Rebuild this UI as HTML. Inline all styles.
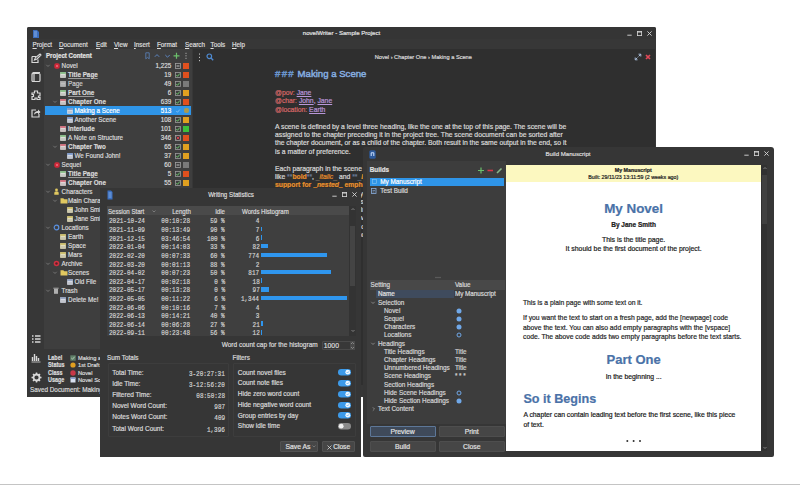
<!DOCTYPE html>
<html><head><meta charset="utf-8">
<style>
*{margin:0;padding:0;box-sizing:border-box}
html,body{width:800px;height:485px;overflow:hidden;background:#fff;font-family:"Liberation Sans",sans-serif;position:relative}
.a{position:absolute;white-space:nowrap;-webkit-text-stroke:0.2px currentColor}
svg.a{overflow:visible}
</style></head><body>
<div class="a" style="left:0;top:484px;width:800px;height:1px;background:#c4c4c4"></div>
<div class="a" style="left:27px;top:27px;width:629px;height:369.5px;background:#373737;border-radius:2px 2px 0 0"></div>
<div class="a" style="left:27px;top:27px;width:629px;height:12px;background:#353535;border-radius:2px 2px 0 0"></div>
<svg class="a" style="left:32px;top:30px" width="7" height="8" viewBox="0 0 7 8"><path d="M1 0h4l2 2v6H1z" fill="#3c6fc0"/><path d="M2 2h3M2 4h3M2 6h3" stroke="#9cc0f0" stroke-width="0.8"/></svg>
<div class="a" style="left:41.50px;width:600px;text-align:center;top:28.30px;font-size:6.1px;line-height:10px;color:#e0e0e0;font-weight:normal;">novelWriter - Sample Project</div>
<svg class="a" style="left:627.0px;top:31.0px" width="5" height="5"><path d="M0.3 4.2h4.4" stroke="#d8d8d8" stroke-width="0.9"/></svg>
<svg class="a" style="left:637.0px;top:31.0px" width="5" height="5"><rect x="0.4" y="0.4" width="4.2" height="4.2" fill="none" stroke="#d8d8d8" stroke-width="0.8"/><path d="M0.4 1.1h4.2" stroke="#d8d8d8" stroke-width="0.8"/></svg>
<svg class="a" style="left:646.7px;top:31.0px" width="5" height="5"><path d="M0.4 0.4l4.2 4.2M4.6 0.4l-4.2 4.2" stroke="#d8d8d8" stroke-width="0.9"/></svg>
<div class="a " style="left:32.50px;top:39.60px;font-size:6.3px;line-height:10px;color:#dcdcdc;font-weight:normal;"><u>P</u>roject</div>
<div class="a " style="left:59.00px;top:39.60px;font-size:6.3px;line-height:10px;color:#dcdcdc;font-weight:normal;"><u>D</u>ocument</div>
<div class="a " style="left:96.00px;top:39.60px;font-size:6.3px;line-height:10px;color:#dcdcdc;font-weight:normal;"><u>E</u>dit</div>
<div class="a " style="left:114.00px;top:39.60px;font-size:6.3px;line-height:10px;color:#dcdcdc;font-weight:normal;"><u>V</u>iew</div>
<div class="a " style="left:134.00px;top:39.60px;font-size:6.3px;line-height:10px;color:#dcdcdc;font-weight:normal;"><u>I</u>nsert</div>
<div class="a " style="left:157.00px;top:39.60px;font-size:6.3px;line-height:10px;color:#dcdcdc;font-weight:normal;"><u>F</u>ormat</div>
<div class="a " style="left:185.00px;top:39.60px;font-size:6.3px;line-height:10px;color:#dcdcdc;font-weight:normal;"><u>S</u>earch</div>
<div class="a " style="left:210.50px;top:39.60px;font-size:6.3px;line-height:10px;color:#dcdcdc;font-weight:normal;"><u>T</u>ools</div>
<div class="a " style="left:232.00px;top:39.60px;font-size:6.3px;line-height:10px;color:#dcdcdc;font-weight:normal;"><u>H</u>elp</div>
<div class="a" style="left:193px;top:49px;width:461.5px;height:336px;background:#2f2f2f;"></div>
<div class="a" style="left:44px;top:49px;width:148px;height:300px;background:#3e3e3e;"></div>
<svg class="a" style="left:31px;top:54px" width="11" height="9" viewBox="0 0 11 9"><path d="M1 2.5h4M1 2.5v6h6v-3" fill="none" stroke="#d8d8d8" stroke-width="1.2"/><path d="M3.5 6l1-2.5 4.5-3.5 1 1-4 4z" fill="none" stroke="#d8d8d8" stroke-width="1.1"/></svg>
<svg class="a" style="left:31px;top:72px" width="10" height="10" viewBox="0 0 10 10"><rect x="1" y="1.5" width="8" height="8" rx="1" fill="none" stroke="#d8d8d8" stroke-width="1.2"/><path d="M3 1.5v8M1 1.5l1.5-1h6.5" fill="none" stroke="#d8d8d8" stroke-width="1.2"/></svg>
<svg class="a" style="left:31px;top:90px" width="10" height="10" viewBox="0 0 10 10"><path d="M3.5 1h3v2h2.5v3h-1.5v1.5h1.5v2h-3v-1.5h-2v1.5h-3v-3h1.5v-2h-1.5v-1.5h2.5z" fill="none" stroke="#d8d8d8" stroke-width="1.2"/></svg>
<svg class="a" style="left:31px;top:108px" width="10" height="10" viewBox="0 0 10 10"><path d="M5 2H1v7h7V6" fill="none" stroke="#d8d8d8" stroke-width="1.2"/><path d="M3 7c0-3 2-4 4-4V1.5l2.5 2.5-2.5 2.5V5c-2 0-3 0.5-4 2z" fill="#d8d8d8"/></svg>
<svg class="a" style="left:31px;top:334px" width="10" height="10" viewBox="0 0 10 10"><path d="M1 2h1.5M1 5h1.5M1 8h1.5M4 2h5.5M4 5h5.5M4 8h5.5" stroke="#d8d8d8" stroke-width="1.3"/></svg>
<svg class="a" style="left:31px;top:352px" width="10" height="10" viewBox="0 0 10 10"><path d="M1.5 9V5M3.5 9V2M5.5 9V4M7.5 9V6" stroke="#d8d8d8" stroke-width="1.4"/><path d="M0.5 10h9" stroke="#d8d8d8" stroke-width="0.8"/></svg>
<svg class="a" style="left:31px;top:372px" width="11" height="11" viewBox="0 0 11 11"><circle cx="5.5" cy="5.5" r="3" fill="none" stroke="#d8d8d8" stroke-width="1.8"/><path d="M5.5 0.5v2M5.5 8.5v2M0.5 5.5h2M8.5 5.5h2M2 2l1.4 1.4M7.6 7.6L9 9M2 9l1.4-1.4M7.6 3.4L9 2" stroke="#d8d8d8" stroke-width="1.5"/></svg>
<div class="a " style="left:45.70px;top:50.90px;font-size:6.8px;line-height:10px;color:#e4e4e4;font-weight:bold;transform:scaleX(0.905);transform-origin:left center;">Project Content</div>
<svg class="a" style="left:145px;top:52px" width="48" height="8" viewBox="0 0 48 8"><path d="M0.8 0.8h3.4v6l-1.7-1.4-1.7 1.4z" fill="none" stroke="#5c85c0" stroke-width="0.8"/><path d="M9.8 4.8l2.2-2.2 2.2 2.2" fill="none" stroke="#5c85c0" stroke-width="1"/><path d="M20.3 3l2.2 2.2 2.2-2.2" fill="none" stroke="#5c85c0" stroke-width="1"/><path d="M31.5 0.8v6M28.5 3.8h6" stroke="#6cc06c" stroke-width="1.2"/><path d="M41 0.8v1M41 3.3v1M41 5.8v1" stroke="#c0c0c0" stroke-width="1"/></svg>
<svg class="a" style="left:45.8px;top:64.1px" width="4" height="3"><path d="M0.3 0.8l1.7 1.7 1.7-1.7" fill="none" stroke="#808080" stroke-width="0.8"/></svg>
<svg class="a" style="left:53.5px;top:62.599999999999994px" width="6" height="6"><rect x="0.3" y="0.3" width="5.4" height="5.4" rx="1.8" fill="#d02838"/><circle cx="3" cy="3" r="1" fill="#f07080"/></svg>
<div class="a " style="left:61.60px;top:60.60px;font-size:6.3px;line-height:10px;color:#d8d8d8;font-weight:normal;">Novel</div>
<div class="a" style="right:628.80px;top:60.60px;font-size:6.3px;line-height:10px;color:#d8d8d8;font-weight:normal;">1,225</div>
<svg class="a" style="left:174.5px;top:62.599999999999994px" width="6" height="6"><rect x="0.5" y="0.5" width="5" height="5" fill="none" stroke="#a0a0a0" stroke-width="0.8"/><path d="M1.5 3h3" stroke="#d0d0d0" stroke-width="0.9"/></svg>
<div class="a" style="left:183px;top:62.599999999999994px;width:6px;height:6px;background:#e0501e;"></div>
<svg class="a" style="left:60px;top:71.6px" width="6" height="6"><rect x="0.2" y="0.2" width="5.6" height="5.6" fill="#e4e6e0"/><rect x="0.2" y="0.2" width="5.6" height="1.6" fill="#7cb87c"/><path d="M1 3.3h4M1 4.7h4" stroke="#9a9a9a" stroke-width="0.5"/></svg>
<div class="a " style="left:68.10px;top:69.60px;font-size:6.3px;line-height:10px;color:#d8d8d8;font-weight:bold;text-decoration:underline;text-decoration-color:#9a9a9a;text-decoration-thickness:0.6px;">Title Page</div>
<div class="a" style="right:628.80px;top:69.60px;font-size:6.3px;line-height:10px;color:#d8d8d8;font-weight:normal;">19</div>
<svg class="a" style="left:174.5px;top:71.6px" width="6" height="6"><rect x="0.5" y="0.5" width="5" height="5" fill="none" stroke="#9a9a9a" stroke-width="0.8"/><path d="M1.3 3l1.2 1.3 2.3-2.8" fill="none" stroke="#70d070" stroke-width="0.9"/></svg>
<div class="a" style="left:183px;top:71.6px;width:6px;height:6px;background:#e0501e;"></div>
<svg class="a" style="left:60px;top:80.6px" width="6" height="6"><rect x="0.2" y="0.2" width="5.6" height="5.6" fill="#c4c4c4"/><rect x="0.2" y="0.2" width="5.6" height="1.6" fill="#a8a8a8"/><path d="M1 3.3h4M1 4.7h4" stroke="#9a9a9a" stroke-width="0.5"/></svg>
<div class="a " style="left:68.10px;top:78.60px;font-size:6.3px;line-height:10px;color:#c8c8c8;font-weight:normal;">Page</div>
<div class="a" style="right:628.80px;top:78.60px;font-size:6.3px;line-height:10px;color:#d8d8d8;font-weight:normal;">49</div>
<svg class="a" style="left:174.5px;top:80.6px" width="6" height="6"><rect x="0.5" y="0.5" width="5" height="5" fill="none" stroke="#9a9a9a" stroke-width="0.8"/><path d="M1.3 3l1.2 1.3 2.3-2.8" fill="none" stroke="#70d070" stroke-width="0.9"/></svg>
<div class="a" style="left:183px;top:80.6px;width:6px;height:6px;background:#7a7a7a;"></div>
<svg class="a" style="left:60px;top:89.6px" width="6" height="6"><rect x="0.2" y="0.2" width="5.6" height="5.6" fill="#e4e6e0"/><rect x="0.2" y="0.2" width="5.6" height="1.6" fill="#7cb87c"/><path d="M1 3.3h4M1 4.7h4" stroke="#9a9a9a" stroke-width="0.5"/></svg>
<div class="a " style="left:68.10px;top:87.60px;font-size:6.3px;line-height:10px;color:#d8d8d8;font-weight:bold;text-decoration:underline;text-decoration-color:#9a9a9a;text-decoration-thickness:0.6px;">Part One</div>
<div class="a" style="right:628.80px;top:87.60px;font-size:6.3px;line-height:10px;color:#d8d8d8;font-weight:normal;">6</div>
<svg class="a" style="left:174.5px;top:89.6px" width="6" height="6"><rect x="0.5" y="0.5" width="5" height="5" fill="none" stroke="#9a9a9a" stroke-width="0.8"/><path d="M1.3 3l1.2 1.3 2.3-2.8" fill="none" stroke="#70d070" stroke-width="0.9"/></svg>
<div class="a" style="left:183px;top:89.6px;width:6px;height:6px;background:#e0a020;"></div>
<svg class="a" style="left:53.0px;top:100.1px" width="4" height="3"><path d="M0.3 0.8l1.7 1.7 1.7-1.7" fill="none" stroke="#808080" stroke-width="0.8"/></svg>
<svg class="a" style="left:60px;top:98.6px" width="6" height="6"><rect x="0.2" y="0.2" width="5.6" height="5.6" fill="#e8dcdc"/><rect x="0.2" y="0.2" width="5.6" height="1.6" fill="#d06070"/><path d="M1 3.3h4M1 4.7h4" stroke="#9a9a9a" stroke-width="0.5"/></svg>
<div class="a " style="left:68.10px;top:96.60px;font-size:6.3px;line-height:10px;color:#d8d8d8;font-weight:bold;">Chapter One</div>
<div class="a" style="right:628.80px;top:96.60px;font-size:6.3px;line-height:10px;color:#d8d8d8;font-weight:normal;">639</div>
<svg class="a" style="left:174.5px;top:98.6px" width="6" height="6"><rect x="0.5" y="0.5" width="5" height="5" fill="none" stroke="#9a9a9a" stroke-width="0.8"/><path d="M1.3 3l1.2 1.3 2.3-2.8" fill="none" stroke="#70d070" stroke-width="0.9"/></svg>
<div class="a" style="left:183px;top:98.6px;width:6px;height:6px;background:#e0501e;"></div>
<div class="a" style="left:45px;top:106.0px;width:146px;height:9px;background:#2f95e8;"></div>
<svg class="a" style="left:66.5px;top:107.6px" width="6" height="6"><rect x="0.2" y="0.2" width="5.6" height="5.6" fill="#d8e0ee"/><rect x="0.2" y="0.2" width="5.6" height="1.6" fill="#7090c8"/><path d="M1 3.3h4M1 4.7h4" stroke="#9a9a9a" stroke-width="0.5"/></svg>
<div class="a " style="left:74.50px;top:105.60px;font-size:6.3px;line-height:10px;color:#ffffff;font-weight:normal;">Making a Scene</div>
<div class="a" style="right:628.80px;top:105.60px;font-size:6.3px;line-height:10px;color:#ffffff;font-weight:normal;">513</div>
<svg class="a" style="left:174.5px;top:107.6px" width="6" height="6"><path d="M1.3 3l1.2 1.3 2.3-2.8" fill="none" stroke="#8cc4f4" stroke-width="0.8"/></svg>
<div class="a" style="left:183.5px;top:108.1px;width:5px;height:5px;background:#a89a50;border-radius:2px"></div>
<svg class="a" style="left:66.5px;top:116.6px" width="6" height="6"><rect x="0.2" y="0.2" width="5.6" height="5.6" fill="#d8e0ee"/><rect x="0.2" y="0.2" width="5.6" height="1.6" fill="#7090c8"/><path d="M1 3.3h4M1 4.7h4" stroke="#9a9a9a" stroke-width="0.5"/></svg>
<div class="a " style="left:74.50px;top:114.60px;font-size:6.3px;line-height:10px;color:#d8d8d8;font-weight:normal;">Another Scene</div>
<div class="a" style="right:628.80px;top:114.60px;font-size:6.3px;line-height:10px;color:#d8d8d8;font-weight:normal;">108</div>
<svg class="a" style="left:174.5px;top:116.6px" width="6" height="6"><rect x="0.5" y="0.5" width="5" height="5" fill="none" stroke="#9a9a9a" stroke-width="0.8"/><path d="M1.3 3l1.2 1.3 2.3-2.8" fill="none" stroke="#70d070" stroke-width="0.9"/></svg>
<div class="a" style="left:183px;top:116.6px;width:6px;height:6px;background:#e0a020;"></div>
<svg class="a" style="left:60px;top:125.6px" width="6" height="6"><rect x="0.2" y="0.2" width="5.6" height="5.6" fill="#e8dcdc"/><rect x="0.2" y="0.2" width="5.6" height="1.6" fill="#d06070"/><path d="M1 3.3h4M1 4.7h4" stroke="#9a9a9a" stroke-width="0.5"/></svg>
<div class="a " style="left:68.10px;top:123.60px;font-size:6.3px;line-height:10px;color:#d8d8d8;font-weight:bold;">Interlude</div>
<div class="a" style="right:628.80px;top:123.60px;font-size:6.3px;line-height:10px;color:#d8d8d8;font-weight:normal;">101</div>
<svg class="a" style="left:174.5px;top:125.6px" width="6" height="6"><rect x="0.5" y="0.5" width="5" height="5" fill="none" stroke="#9a9a9a" stroke-width="0.8"/><path d="M1.3 3l1.2 1.3 2.3-2.8" fill="none" stroke="#70d070" stroke-width="0.9"/></svg>
<div class="a" style="left:183px;top:125.6px;width:6px;height:6px;background:#3cc03c;"></div>
<svg class="a" style="left:60px;top:134.6px" width="6" height="6"><rect x="0.2" y="0.2" width="5.6" height="5.6" fill="#e4e6e0"/><rect x="0.2" y="0.2" width="5.6" height="1.6" fill="#7cb87c"/><path d="M1 3.3h4M1 4.7h4" stroke="#9a9a9a" stroke-width="0.5"/></svg>
<div class="a " style="left:68.10px;top:132.60px;font-size:6.3px;line-height:10px;color:#d8d8d8;font-weight:normal;">A Note on Structure</div>
<div class="a" style="right:628.80px;top:132.60px;font-size:6.3px;line-height:10px;color:#d8d8d8;font-weight:normal;">346</div>
<svg class="a" style="left:174.5px;top:134.6px" width="6" height="6"><rect x="0.5" y="0.5" width="5" height="5" fill="none" stroke="#a0a0a0" stroke-width="0.8"/><path d="M1.5 1.5l3 3M4.5 1.5l-3 3" stroke="#e04050" stroke-width="0.9"/></svg>
<div class="a" style="left:183px;top:134.6px;width:6px;height:6px;background:#e0501e;"></div>
<svg class="a" style="left:53.0px;top:145.1px" width="4" height="3"><path d="M0.3 0.8l1.7 1.7 1.7-1.7" fill="none" stroke="#808080" stroke-width="0.8"/></svg>
<svg class="a" style="left:60px;top:143.6px" width="6" height="6"><rect x="0.2" y="0.2" width="5.6" height="5.6" fill="#e8dcdc"/><rect x="0.2" y="0.2" width="5.6" height="1.6" fill="#d06070"/><path d="M1 3.3h4M1 4.7h4" stroke="#9a9a9a" stroke-width="0.5"/></svg>
<div class="a " style="left:68.10px;top:141.60px;font-size:6.3px;line-height:10px;color:#d8d8d8;font-weight:bold;">Chapter Two</div>
<div class="a" style="right:628.80px;top:141.60px;font-size:6.3px;line-height:10px;color:#d8d8d8;font-weight:normal;">65</div>
<svg class="a" style="left:174.5px;top:143.6px" width="6" height="6"><rect x="0.5" y="0.5" width="5" height="5" fill="none" stroke="#9a9a9a" stroke-width="0.8"/><path d="M1.3 3l1.2 1.3 2.3-2.8" fill="none" stroke="#70d070" stroke-width="0.9"/></svg>
<div class="a" style="left:183px;top:143.6px;width:6px;height:6px;background:#e0a020;"></div>
<svg class="a" style="left:66.5px;top:152.6px" width="6" height="6"><rect x="0.2" y="0.2" width="5.6" height="5.6" fill="#d8e0ee"/><rect x="0.2" y="0.2" width="5.6" height="1.6" fill="#7090c8"/><path d="M1 3.3h4M1 4.7h4" stroke="#9a9a9a" stroke-width="0.5"/></svg>
<div class="a " style="left:74.50px;top:150.60px;font-size:6.3px;line-height:10px;color:#d8d8d8;font-weight:normal;">We Found John!</div>
<div class="a" style="right:628.80px;top:150.60px;font-size:6.3px;line-height:10px;color:#d8d8d8;font-weight:normal;">37</div>
<svg class="a" style="left:174.5px;top:152.6px" width="6" height="6"><rect x="0.5" y="0.5" width="5" height="5" fill="none" stroke="#9a9a9a" stroke-width="0.8"/><path d="M1.3 3l1.2 1.3 2.3-2.8" fill="none" stroke="#70d070" stroke-width="0.9"/></svg>
<div class="a" style="left:183px;top:152.6px;width:6px;height:6px;background:#e0a020;"></div>
<svg class="a" style="left:45.8px;top:163.1px" width="4" height="3"><path d="M0.3 0.8l1.7 1.7 1.7-1.7" fill="none" stroke="#808080" stroke-width="0.8"/></svg>
<svg class="a" style="left:53.5px;top:161.6px" width="6" height="6"><rect x="0.3" y="0.3" width="5.4" height="5.4" rx="1.8" fill="#d02838"/><circle cx="3" cy="3" r="1" fill="#f07080"/></svg>
<div class="a " style="left:61.60px;top:159.60px;font-size:6.3px;line-height:10px;color:#d8d8d8;font-weight:normal;">Sequel</div>
<div class="a" style="right:628.80px;top:159.60px;font-size:6.3px;line-height:10px;color:#d8d8d8;font-weight:normal;">60</div>
<svg class="a" style="left:174.5px;top:161.6px" width="6" height="6"><rect x="0.5" y="0.5" width="5" height="5" fill="none" stroke="#a0a0a0" stroke-width="0.8"/><path d="M1.5 3h3" stroke="#d0d0d0" stroke-width="0.9"/></svg>
<div class="a" style="left:183px;top:161.6px;width:6px;height:6px;background:#7a7a7a;"></div>
<svg class="a" style="left:60px;top:170.6px" width="6" height="6"><rect x="0.2" y="0.2" width="5.6" height="5.6" fill="#e4e6e0"/><rect x="0.2" y="0.2" width="5.6" height="1.6" fill="#7cb87c"/><path d="M1 3.3h4M1 4.7h4" stroke="#9a9a9a" stroke-width="0.5"/></svg>
<div class="a " style="left:68.10px;top:168.60px;font-size:6.3px;line-height:10px;color:#d8d8d8;font-weight:bold;text-decoration:underline;text-decoration-color:#9a9a9a;text-decoration-thickness:0.6px;">Title Page</div>
<div class="a" style="right:628.80px;top:168.60px;font-size:6.3px;line-height:10px;color:#d8d8d8;font-weight:normal;">5</div>
<svg class="a" style="left:174.5px;top:170.6px" width="6" height="6"><rect x="0.5" y="0.5" width="5" height="5" fill="none" stroke="#9a9a9a" stroke-width="0.8"/><path d="M1.3 3l1.2 1.3 2.3-2.8" fill="none" stroke="#70d070" stroke-width="0.9"/></svg>
<div class="a" style="left:183px;top:170.6px;width:6px;height:6px;background:#e0501e;"></div>
<svg class="a" style="left:60px;top:179.6px" width="6" height="6"><rect x="0.2" y="0.2" width="5.6" height="5.6" fill="#e8dcdc"/><rect x="0.2" y="0.2" width="5.6" height="1.6" fill="#d06070"/><path d="M1 3.3h4M1 4.7h4" stroke="#9a9a9a" stroke-width="0.5"/></svg>
<div class="a " style="left:68.10px;top:177.60px;font-size:6.3px;line-height:10px;color:#d8d8d8;font-weight:bold;">Chapter One</div>
<div class="a" style="right:628.80px;top:177.60px;font-size:6.3px;line-height:10px;color:#d8d8d8;font-weight:normal;">55</div>
<svg class="a" style="left:174.5px;top:179.6px" width="6" height="6"><rect x="0.5" y="0.5" width="5" height="5" fill="none" stroke="#9a9a9a" stroke-width="0.8"/><path d="M1.3 3l1.2 1.3 2.3-2.8" fill="none" stroke="#70d070" stroke-width="0.9"/></svg>
<div class="a" style="left:183px;top:179.6px;width:6px;height:6px;background:#e0a020;"></div>
<svg class="a" style="left:45.8px;top:190.1px" width="4" height="3"><path d="M0.3 0.8l1.7 1.7 1.7-1.7" fill="none" stroke="#808080" stroke-width="0.8"/></svg>
<svg class="a" style="left:52.5px;top:188.1px" width="7" height="7"><circle cx="3.5" cy="2" r="1.4" fill="#e0c860"/><path d="M1.3 6.8v-1.8c0-1 1-1.4 2.2-1.4S5.7 4 5.7 5v1.8z" fill="#e0c860"/></svg>
<div class="a " style="left:61.60px;top:186.60px;font-size:6.3px;line-height:10px;color:#d8d8d8;font-weight:normal;">Characters</div>
<svg class="a" style="left:53.0px;top:199.1px" width="4" height="3"><path d="M0.3 0.8l1.7 1.7 1.7-1.7" fill="none" stroke="#808080" stroke-width="0.8"/></svg>
<svg class="a" style="left:60px;top:197.1px" width="8" height="7"><path d="M0.5 1.2h2.8l1 1h3.2v4.3h-7z" fill="#e0c860"/></svg>
<div class="a " style="left:68.10px;top:195.60px;font-size:6.3px;line-height:10px;color:#d8d8d8;font-weight:normal;">Main Characters</div>
<svg class="a" style="left:66.5px;top:206.6px" width="6" height="6"><rect x="0.2" y="0.2" width="5.6" height="5.6" fill="#ece6c0"/><rect x="0.2" y="0.2" width="5.6" height="1.6" fill="#c8b860"/><path d="M1 3.3h4M1 4.7h4" stroke="#9a9a9a" stroke-width="0.5"/></svg>
<div class="a " style="left:74.50px;top:204.60px;font-size:6.3px;line-height:10px;color:#d8d8d8;font-weight:normal;">John Smith</div>
<svg class="a" style="left:66.5px;top:215.6px" width="6" height="6"><rect x="0.2" y="0.2" width="5.6" height="5.6" fill="#ece6c0"/><rect x="0.2" y="0.2" width="5.6" height="1.6" fill="#c8b860"/><path d="M1 3.3h4M1 4.7h4" stroke="#9a9a9a" stroke-width="0.5"/></svg>
<div class="a " style="left:74.50px;top:213.60px;font-size:6.3px;line-height:10px;color:#d8d8d8;font-weight:normal;">Jane Smith</div>
<svg class="a" style="left:45.8px;top:226.1px" width="4" height="3"><path d="M0.3 0.8l1.7 1.7 1.7-1.7" fill="none" stroke="#808080" stroke-width="0.8"/></svg>
<svg class="a" style="left:52.5px;top:224.1px" width="7" height="7"><circle cx="3.5" cy="3.5" r="2.3" fill="none" stroke="#5a90e0" stroke-width="1.2"/></svg>
<div class="a " style="left:61.60px;top:222.60px;font-size:6.3px;line-height:10px;color:#d8d8d8;font-weight:normal;">Locations</div>
<svg class="a" style="left:60px;top:233.6px" width="6" height="6"><rect x="0.2" y="0.2" width="5.6" height="5.6" fill="#ece6c0"/><rect x="0.2" y="0.2" width="5.6" height="1.6" fill="#c8b860"/><path d="M1 3.3h4M1 4.7h4" stroke="#9a9a9a" stroke-width="0.5"/></svg>
<div class="a " style="left:68.10px;top:231.60px;font-size:6.3px;line-height:10px;color:#d8d8d8;font-weight:normal;">Earth</div>
<svg class="a" style="left:60px;top:242.6px" width="6" height="6"><rect x="0.2" y="0.2" width="5.6" height="5.6" fill="#ece6c0"/><rect x="0.2" y="0.2" width="5.6" height="1.6" fill="#c8b860"/><path d="M1 3.3h4M1 4.7h4" stroke="#9a9a9a" stroke-width="0.5"/></svg>
<div class="a " style="left:68.10px;top:240.60px;font-size:6.3px;line-height:10px;color:#d8d8d8;font-weight:normal;">Space</div>
<svg class="a" style="left:60px;top:251.6px" width="6" height="6"><rect x="0.2" y="0.2" width="5.6" height="5.6" fill="#ece6c0"/><rect x="0.2" y="0.2" width="5.6" height="1.6" fill="#c8b860"/><path d="M1 3.3h4M1 4.7h4" stroke="#9a9a9a" stroke-width="0.5"/></svg>
<div class="a " style="left:68.10px;top:249.60px;font-size:6.3px;line-height:10px;color:#d8d8d8;font-weight:normal;">Mars</div>
<svg class="a" style="left:45.8px;top:262.1px" width="4" height="3"><path d="M0.3 0.8l1.7 1.7 1.7-1.7" fill="none" stroke="#808080" stroke-width="0.8"/></svg>
<svg class="a" style="left:52.5px;top:260.1px" width="7" height="7"><circle cx="3.5" cy="3.5" r="2.8" fill="#d03040"/><circle cx="3.5" cy="3.5" r="1.2" fill="#5a2028"/></svg>
<div class="a " style="left:61.60px;top:258.60px;font-size:6.3px;line-height:10px;color:#d8d8d8;font-weight:normal;">Archive</div>
<svg class="a" style="left:53.0px;top:271.1px" width="4" height="3"><path d="M0.3 0.8l1.7 1.7 1.7-1.7" fill="none" stroke="#808080" stroke-width="0.8"/></svg>
<svg class="a" style="left:60px;top:269.1px" width="8" height="7"><path d="M0.5 1.2h2.8l1 1h3.2v4.3h-7z" fill="#e0c860"/></svg>
<div class="a " style="left:68.10px;top:267.60px;font-size:6.3px;line-height:10px;color:#d8d8d8;font-weight:normal;">Scenes</div>
<svg class="a" style="left:66.5px;top:278.6px" width="6" height="6"><rect x="0.2" y="0.2" width="5.6" height="5.6" fill="#dde2ee"/><rect x="0.2" y="0.2" width="5.6" height="1.6" fill="#8898b8"/><path d="M1 3.3h4M1 4.7h4" stroke="#9a9a9a" stroke-width="0.5"/></svg>
<div class="a " style="left:74.50px;top:276.60px;font-size:6.3px;line-height:10px;color:#d8d8d8;font-weight:normal;">Old File</div>
<svg class="a" style="left:45.8px;top:289.1px" width="4" height="3"><path d="M0.3 0.8l1.7 1.7 1.7-1.7" fill="none" stroke="#808080" stroke-width="0.8"/></svg>
<svg class="a" style="left:52.5px;top:287.1px" width="6" height="7"><rect x="1" y="1.8" width="4" height="5" fill="#b0b0b0"/><path d="M0.3 1.2h5.4" stroke="#b0b0b0" stroke-width="0.9"/></svg>
<div class="a " style="left:61.60px;top:285.60px;font-size:6.3px;line-height:10px;color:#d8d8d8;font-weight:normal;">Trash</div>
<svg class="a" style="left:60px;top:296.6px" width="6" height="6"><rect x="0.2" y="0.2" width="5.6" height="5.6" fill="#dde2ee"/><rect x="0.2" y="0.2" width="5.6" height="1.6" fill="#8898b8"/><path d="M1 3.3h4M1 4.7h4" stroke="#9a9a9a" stroke-width="0.5"/></svg>
<div class="a " style="left:68.10px;top:294.60px;font-size:6.3px;line-height:10px;color:#d8d8d8;font-weight:normal;">Delete Me!</div>
<div class="a " style="left:47.70px;top:352.50px;font-size:6.3px;line-height:10px;color:#dcdcdc;font-weight:bold;transform:scaleX(0.86);transform-origin:left center;">Label</div>
<div class="a " style="left:47.70px;top:360.10px;font-size:6.3px;line-height:10px;color:#dcdcdc;font-weight:bold;transform:scaleX(0.86);transform-origin:left center;">Status</div>
<div class="a " style="left:47.70px;top:367.70px;font-size:6.3px;line-height:10px;color:#dcdcdc;font-weight:bold;transform:scaleX(0.86);transform-origin:left center;">Class</div>
<div class="a " style="left:47.70px;top:375.30px;font-size:6.3px;line-height:10px;color:#dcdcdc;font-weight:bold;transform:scaleX(0.86);transform-origin:left center;">Usage</div>
<svg class="a" style="left:70px;top:354.5px" width="6" height="6"><rect x="0.3" y="0.3" width="5.4" height="5.4" fill="#5f7f68"/><path d="M1.3 3l1.2 1.2 2.2-2.5" fill="none" stroke="#c8e0c8" stroke-width="0.8"/></svg>
<svg class="a" style="left:70px;top:362px" width="6" height="6"><circle cx="3" cy="3" r="2.6" fill="#e0a020"/></svg>
<svg class="a" style="left:70px;top:369.5px" width="6" height="6"><circle cx="3" cy="3" r="2.7" fill="#c83848"/></svg>
<svg class="a" style="left:70px;top:377px" width="6" height="6"><rect x="0.5" y="0.5" width="5" height="5" fill="#d8e0f0"/><rect x="0.5" y="0.5" width="5" height="1.5" fill="#8aa0d0"/></svg>
<div class="a " style="left:78.20px;top:352.50px;font-size:6.2px;line-height:10px;color:#dcdcdc;font-weight:normal;transform:scaleX(0.92);transform-origin:left center;">Making a</div>
<div class="a " style="left:78.20px;top:360.05px;font-size:6.2px;line-height:10px;color:#dcdcdc;font-weight:normal;transform:scaleX(0.92);transform-origin:left center;">1st Draft</div>
<div class="a " style="left:78.20px;top:367.60px;font-size:6.2px;line-height:10px;color:#dcdcdc;font-weight:normal;transform:scaleX(0.92);transform-origin:left center;">Novel</div>
<div class="a " style="left:78.20px;top:375.15px;font-size:6.2px;line-height:10px;color:#dcdcdc;font-weight:normal;transform:scaleX(0.92);transform-origin:left center;">Novel Sc</div>
<div class="a " style="left:30.10px;top:385.30px;font-size:6.7px;line-height:10px;color:#d8d8d8;font-weight:normal;transform:scaleX(0.95);transform-origin:left center;">Saved Document: Making a Scene</div>
<svg class="a" style="left:198px;top:53px" width="3" height="9"><path d="M1.5 0.5v1.2M1.5 3.8v1.2M1.5 7v1.2" stroke="#c0c0c0" stroke-width="1"/></svg>
<svg class="a" style="left:206px;top:53px" width="8" height="8"><circle cx="3.3" cy="3.3" r="2.3" fill="none" stroke="#4f8ad0" stroke-width="1.2"/><path d="M5 5l2.2 2.2" stroke="#4f8ad0" stroke-width="1.4"/></svg>
<div class="a " style="left:374.70px;top:52.20px;font-size:5.65px;line-height:10px;color:#d8d8d8;font-weight:normal;">Novel › Chapter One › Making a Scene</div>
<svg class="a" style="left:634px;top:53px" width="8" height="8"><path d="M4.5 1.2h2.3v2.3M6.8 1.2L4.6 3.4M3.5 6.8H1.2V4.5M1.2 6.8l2.2-2.2" fill="none" stroke="#a8bcd8" stroke-width="1"/></svg>
<svg class="a" style="left:644.8px;top:54px" width="6" height="6"><path d="M1 1l4 4M5 1l-4 4" stroke="#e04858" stroke-width="1.7"/></svg>
<div class="a " style="left:275.00px;top:67.60px;font-size:9.6px;line-height:12px;color:#86aee0;font-weight:normal;-webkit-text-stroke:0.45px currentColor;"><span style="color:#6a94cc;letter-spacing:1.3px">###</span> Making a Scene</div>
<div class="a " style="left:275.00px;top:87.60px;font-size:6.8px;line-height:10px;color:#b896d8;font-weight:normal;"><span style="color:#d86868">@pov:</span> <span style="text-decoration:underline">Jane</span></div>
<div class="a " style="left:275.00px;top:96.40px;font-size:6.8px;line-height:10px;color:#b896d8;font-weight:normal;"><span style="color:#d86868">@char:</span> <span style="text-decoration:underline">John</span>, <span style="text-decoration:underline">Jane</span></div>
<div class="a " style="left:275.00px;top:104.50px;font-size:6.8px;line-height:10px;color:#b896d8;font-weight:normal;"><span style="color:#d86868">@location:</span> <span style="text-decoration:underline">Earth</span></div>
<div class="a " style="left:275.00px;top:121.75px;font-size:6.8px;line-height:10px;color:#d8d8d8;font-weight:normal;">A scene is defined by a level three heading, like the one at the top of this page. The scene will be</div>
<div class="a " style="left:275.00px;top:130.08px;font-size:6.8px;line-height:10px;color:#d8d8d8;font-weight:normal;">assigned to the chapter preceding it in the project tree. The scene document can be sorted after</div>
<div class="a " style="left:275.00px;top:138.41px;font-size:6.8px;line-height:10px;color:#d8d8d8;font-weight:normal;">the chapter document, or as a child of the chapter. Both result in the same output in the end, so it</div>
<div class="a " style="left:275.00px;top:146.74px;font-size:6.8px;line-height:10px;color:#d8d8d8;font-weight:normal;">is a matter of preference.</div>
<div class="a " style="left:275.00px;top:163.75px;font-size:6.8px;line-height:10px;color:#d8d8d8;font-weight:normal;">Each paragraph in the scene is rendered as a paragraph of text</div>
<div class="a " style="left:275.00px;top:171.90px;font-size:6.8px;line-height:10px;color:#d8d8d8;font-weight:normal;">like <span style="color:#6a7a98">**</span><b style="color:#e8902c">bold</b><span style="color:#6a7a98">**</span>, <span style="color:#8a7a6a">_</span><i style="color:#e8902c">italic</i><span style="color:#8a7a6a">_</span> and <span style="color:#6a7a98">**_</span><b style="color:#e8902c"><i>bold italic</i></b></div>
<div class="a " style="left:275.00px;top:180.10px;font-size:6.8px;line-height:10px;color:#e8902c;font-weight:normal;"><b style="color:#e8902c">support for _<i>nested</i>_ emphasis</b></div>
<div class="a " style="left:275.00px;top:188.60px;font-size:6.8px;line-height:10px;color:#d8d8d8;font-weight:normal;">Paragraphs are separated by an empty line, and line breaks within a paragraph are preserved</div>
<div class="a " style="left:275.00px;top:196.90px;font-size:6.8px;line-height:10px;color:#d8d8d8;font-weight:normal;">in the output. You can also use the [newpage] and [vspace] codes to control spacing in the text</div>
<div class="a " style="left:275.00px;top:205.20px;font-size:6.8px;line-height:10px;color:#d8d8d8;font-weight:normal;">that follows. Comments are lines starting with a % character and are ignored when building.</div>
<div class="a " style="left:275.00px;top:213.30px;font-size:6.8px;line-height:10px;color:#d8d8d8;font-weight:normal;">The scene document can have as many headings as you like, and each one gets its own</div>
<div class="a " style="left:275.00px;top:221.60px;font-size:6.8px;line-height:10px;color:#d8d8d8;font-weight:normal;">entry in the outline view. Synopsis comments can be added to each heading as well, and these</div>
<div class="a " style="left:275.00px;top:229.90px;font-size:6.8px;line-height:10px;color:#d8d8d8;font-weight:normal;">will show up in the outline and in the manuscript build if you choose to include them there.</div>
<div class="a" style="left:100px;top:187.7px;width:261.1px;height:269.8px;background:#363636;"></div>
<svg class="a" style="left:107px;top:190px" width="6" height="10" viewBox="0 0 6 10"><path d="M0.5 0.5h3.5l1.5 1.5v7.5H0.5z" fill="#3a6fc0"/><path d="M1.5 3h3M1.5 5h3M1.5 7h3" stroke="#a0c4f0" stroke-width="0.7"/></svg>
<div class="a" style="left:-69.20px;width:600px;text-align:center;top:190.40px;font-size:7px;line-height:10px;color:#dedede;font-weight:normal;transform:scaleX(0.886);transform-origin:center center;">Writing Statistics</div>
<svg class="a" style="left:332.0px;top:192.2px" width="5" height="5"><path d="M0.3 4.2h4.4" stroke="#d8d8d8" stroke-width="0.9"/></svg>
<svg class="a" style="left:341.9px;top:192.2px" width="5" height="5"><rect x="0.4" y="0.4" width="4.2" height="4.2" fill="none" stroke="#d8d8d8" stroke-width="0.8"/><path d="M0.4 1.1h4.2" stroke="#d8d8d8" stroke-width="0.8"/></svg>
<svg class="a" style="left:351.9px;top:192.2px" width="5" height="5"><path d="M0.4 0.4l4.2 4.2M4.6 0.4l-4.2 4.2" stroke="#d8d8d8" stroke-width="0.9"/></svg>
<div class="a" style="left:107px;top:206px;width:249px;height:129.5px;background:#3f3f3f;"></div>
<div class="a" style="left:107px;top:206px;width:242px;height:8.8px;background:#4a4a4a;"></div>
<div class="a" style="left:349px;top:206px;width:6.5px;height:129.5px;background:#333333;"></div>
<div class="a" style="left:349.5px;top:226px;width:5.5px;height:60px;background:#444444;"></div>
<svg class="a" style="left:349.5px;top:207px" width="6" height="4"><path d="M1.5 3l1.5-1.5 1.5 1.5" fill="none" stroke="#a0a0a0" stroke-width="0.7"/></svg>
<svg class="a" style="left:349.5px;top:329px" width="6" height="4"><path d="M1.5 1l1.5 1.5 1.5-1.5" fill="none" stroke="#a0a0a0" stroke-width="0.7"/></svg>
<div class="a " style="left:108.10px;top:206.60px;font-size:6.8px;line-height:10px;color:#d8d8d8;font-weight:normal;transform:scaleX(0.897);transform-origin:left center;">Session Start</div>
<svg class="a" style="left:152px;top:210px" width="4" height="3"><path d="M0.5 0.5l1.5 1.5 1.5-1.5" fill="none" stroke="#909090" stroke-width="0.7"/></svg>
<div class="a" style="right:609.70px;top:206.60px;font-size:6.8px;line-height:10px;color:#d8d8d8;font-weight:normal;transform:scaleX(0.897);transform-origin:right center;">Length</div>
<div class="a" style="right:575.00px;top:206.60px;font-size:6.8px;line-height:10px;color:#d8d8d8;font-weight:normal;transform:scaleX(0.897);transform-origin:right center;">Idle</div>
<div class="a" style="right:540.70px;top:206.60px;font-size:6.8px;line-height:10px;color:#d8d8d8;font-weight:normal;transform:scaleX(0.897);transform-origin:right center;">Words</div>
<div class="a " style="left:261.00px;top:206.60px;font-size:6.8px;line-height:10px;color:#d8d8d8;font-weight:normal;transform:scaleX(0.897);transform-origin:left center;">Histogram</div>
<div class="a " style="left:108.50px;top:216.40px;font-size:7.3px;line-height:10px;color:#d0d0d0;font-weight:normal;font-family:'Liberation Mono',monospace;transform:scaleX(0.82);transform-origin:left center;">2021-10-24</div>
<div class="a" style="right:609.70px;top:216.40px;font-size:7.3px;line-height:10px;color:#d0d0d0;font-weight:normal;font-family:'Liberation Mono',monospace;transform:scaleX(0.82);transform-origin:right center;">00:10:28</div>
<div class="a" style="right:575.00px;top:216.40px;font-size:7.3px;line-height:10px;color:#d0d0d0;font-weight:normal;font-family:'Liberation Mono',monospace;transform:scaleX(0.82);transform-origin:right center;">59 %</div>
<div class="a" style="right:540.70px;top:216.40px;font-size:7.3px;line-height:10px;color:#d0d0d0;font-weight:normal;font-family:'Liberation Mono',monospace;transform:scaleX(0.82);transform-origin:right center;">4</div>
<div class="a " style="left:108.50px;top:225.02px;font-size:7.3px;line-height:10px;color:#d0d0d0;font-weight:normal;font-family:'Liberation Mono',monospace;transform:scaleX(0.82);transform-origin:left center;">2021-11-09</div>
<div class="a" style="right:609.70px;top:225.02px;font-size:7.3px;line-height:10px;color:#d0d0d0;font-weight:normal;font-family:'Liberation Mono',monospace;transform:scaleX(0.82);transform-origin:right center;">00:13:49</div>
<div class="a" style="right:575.00px;top:225.02px;font-size:7.3px;line-height:10px;color:#d0d0d0;font-weight:normal;font-family:'Liberation Mono',monospace;transform:scaleX(0.82);transform-origin:right center;">90 %</div>
<div class="a" style="right:540.70px;top:225.02px;font-size:7.3px;line-height:10px;color:#d0d0d0;font-weight:normal;font-family:'Liberation Mono',monospace;transform:scaleX(0.82);transform-origin:right center;">7</div>
<div class="a" style="left:261px;top:226.6px;width:0.6px;height:4.6px;background:#2f96ee;"></div>
<div class="a " style="left:108.50px;top:233.64px;font-size:7.3px;line-height:10px;color:#d0d0d0;font-weight:normal;font-family:'Liberation Mono',monospace;transform:scaleX(0.82);transform-origin:left center;">2021-12-15</div>
<div class="a" style="right:609.70px;top:233.64px;font-size:7.3px;line-height:10px;color:#d0d0d0;font-weight:normal;font-family:'Liberation Mono',monospace;transform:scaleX(0.82);transform-origin:right center;">03:46:54</div>
<div class="a" style="right:575.00px;top:233.64px;font-size:7.3px;line-height:10px;color:#d0d0d0;font-weight:normal;font-family:'Liberation Mono',monospace;transform:scaleX(0.82);transform-origin:right center;">100 %</div>
<div class="a" style="right:540.70px;top:233.64px;font-size:7.3px;line-height:10px;color:#d0d0d0;font-weight:normal;font-family:'Liberation Mono',monospace;transform:scaleX(0.82);transform-origin:right center;">6</div>
<div class="a" style="left:261px;top:235.2px;width:0.6px;height:4.6px;background:#2f96ee;"></div>
<div class="a " style="left:108.50px;top:242.26px;font-size:7.3px;line-height:10px;color:#d0d0d0;font-weight:normal;font-family:'Liberation Mono',monospace;transform:scaleX(0.82);transform-origin:left center;">2022-01-04</div>
<div class="a" style="right:609.70px;top:242.26px;font-size:7.3px;line-height:10px;color:#d0d0d0;font-weight:normal;font-family:'Liberation Mono',monospace;transform:scaleX(0.82);transform-origin:right center;">00:14:03</div>
<div class="a" style="right:575.00px;top:242.26px;font-size:7.3px;line-height:10px;color:#d0d0d0;font-weight:normal;font-family:'Liberation Mono',monospace;transform:scaleX(0.82);transform-origin:right center;">33 %</div>
<div class="a" style="right:540.70px;top:242.26px;font-size:7.3px;line-height:10px;color:#d0d0d0;font-weight:normal;font-family:'Liberation Mono',monospace;transform:scaleX(0.82);transform-origin:right center;">82</div>
<div class="a" style="left:261px;top:243.9px;width:7px;height:4.6px;background:#2f96ee;"></div>
<div class="a " style="left:108.50px;top:250.88px;font-size:7.3px;line-height:10px;color:#d0d0d0;font-weight:normal;font-family:'Liberation Mono',monospace;transform:scaleX(0.82);transform-origin:left center;">2022-02-20</div>
<div class="a" style="right:609.70px;top:250.88px;font-size:7.3px;line-height:10px;color:#d0d0d0;font-weight:normal;font-family:'Liberation Mono',monospace;transform:scaleX(0.82);transform-origin:right center;">00:07:33</div>
<div class="a" style="right:575.00px;top:250.88px;font-size:7.3px;line-height:10px;color:#d0d0d0;font-weight:normal;font-family:'Liberation Mono',monospace;transform:scaleX(0.82);transform-origin:right center;">60 %</div>
<div class="a" style="right:540.70px;top:250.88px;font-size:7.3px;line-height:10px;color:#d0d0d0;font-weight:normal;font-family:'Liberation Mono',monospace;transform:scaleX(0.82);transform-origin:right center;">774</div>
<div class="a" style="left:261px;top:252.5px;width:66px;height:4.6px;background:#2f96ee;"></div>
<div class="a " style="left:108.50px;top:259.50px;font-size:7.3px;line-height:10px;color:#d0d0d0;font-weight:normal;font-family:'Liberation Mono',monospace;transform:scaleX(0.82);transform-origin:left center;">2022-03-20</div>
<div class="a" style="right:609.70px;top:259.50px;font-size:7.3px;line-height:10px;color:#d0d0d0;font-weight:normal;font-family:'Liberation Mono',monospace;transform:scaleX(0.82);transform-origin:right center;">00:01:13</div>
<div class="a" style="right:575.00px;top:259.50px;font-size:7.3px;line-height:10px;color:#d0d0d0;font-weight:normal;font-family:'Liberation Mono',monospace;transform:scaleX(0.82);transform-origin:right center;">88 %</div>
<div class="a" style="right:540.70px;top:259.50px;font-size:7.3px;line-height:10px;color:#d0d0d0;font-weight:normal;font-family:'Liberation Mono',monospace;transform:scaleX(0.82);transform-origin:right center;">2</div>
<div class="a " style="left:108.50px;top:268.12px;font-size:7.3px;line-height:10px;color:#d0d0d0;font-weight:normal;font-family:'Liberation Mono',monospace;transform:scaleX(0.82);transform-origin:left center;">2022-04-02</div>
<div class="a" style="right:609.70px;top:268.12px;font-size:7.3px;line-height:10px;color:#d0d0d0;font-weight:normal;font-family:'Liberation Mono',monospace;transform:scaleX(0.82);transform-origin:right center;">00:07:23</div>
<div class="a" style="right:575.00px;top:268.12px;font-size:7.3px;line-height:10px;color:#d0d0d0;font-weight:normal;font-family:'Liberation Mono',monospace;transform:scaleX(0.82);transform-origin:right center;">50 %</div>
<div class="a" style="right:540.70px;top:268.12px;font-size:7.3px;line-height:10px;color:#d0d0d0;font-weight:normal;font-family:'Liberation Mono',monospace;transform:scaleX(0.82);transform-origin:right center;">817</div>
<div class="a" style="left:261px;top:269.7px;width:70px;height:4.6px;background:#2f96ee;"></div>
<div class="a " style="left:108.50px;top:276.74px;font-size:7.3px;line-height:10px;color:#d0d0d0;font-weight:normal;font-family:'Liberation Mono',monospace;transform:scaleX(0.82);transform-origin:left center;">2022-04-17</div>
<div class="a" style="right:609.70px;top:276.74px;font-size:7.3px;line-height:10px;color:#d0d0d0;font-weight:normal;font-family:'Liberation Mono',monospace;transform:scaleX(0.82);transform-origin:right center;">00:02:18</div>
<div class="a" style="right:575.00px;top:276.74px;font-size:7.3px;line-height:10px;color:#d0d0d0;font-weight:normal;font-family:'Liberation Mono',monospace;transform:scaleX(0.82);transform-origin:right center;">0 %</div>
<div class="a" style="right:540.70px;top:276.74px;font-size:7.3px;line-height:10px;color:#d0d0d0;font-weight:normal;font-family:'Liberation Mono',monospace;transform:scaleX(0.82);transform-origin:right center;">18</div>
<div class="a" style="left:261px;top:278.3px;width:1.3px;height:4.6px;background:#2f96ee;"></div>
<div class="a " style="left:108.50px;top:285.36px;font-size:7.3px;line-height:10px;color:#d0d0d0;font-weight:normal;font-family:'Liberation Mono',monospace;transform:scaleX(0.82);transform-origin:left center;">2022-05-17</div>
<div class="a" style="right:609.70px;top:285.36px;font-size:7.3px;line-height:10px;color:#d0d0d0;font-weight:normal;font-family:'Liberation Mono',monospace;transform:scaleX(0.82);transform-origin:right center;">00:13:28</div>
<div class="a" style="right:575.00px;top:285.36px;font-size:7.3px;line-height:10px;color:#d0d0d0;font-weight:normal;font-family:'Liberation Mono',monospace;transform:scaleX(0.82);transform-origin:right center;">0 %</div>
<div class="a" style="right:540.70px;top:285.36px;font-size:7.3px;line-height:10px;color:#d0d0d0;font-weight:normal;font-family:'Liberation Mono',monospace;transform:scaleX(0.82);transform-origin:right center;">97</div>
<div class="a" style="left:261px;top:287.0px;width:8px;height:4.6px;background:#2f96ee;"></div>
<div class="a " style="left:108.50px;top:293.98px;font-size:7.3px;line-height:10px;color:#d0d0d0;font-weight:normal;font-family:'Liberation Mono',monospace;transform:scaleX(0.82);transform-origin:left center;">2022-05-05</div>
<div class="a" style="right:609.70px;top:293.98px;font-size:7.3px;line-height:10px;color:#d0d0d0;font-weight:normal;font-family:'Liberation Mono',monospace;transform:scaleX(0.82);transform-origin:right center;">00:11:22</div>
<div class="a" style="right:575.00px;top:293.98px;font-size:7.3px;line-height:10px;color:#d0d0d0;font-weight:normal;font-family:'Liberation Mono',monospace;transform:scaleX(0.82);transform-origin:right center;">6 %</div>
<div class="a" style="right:540.70px;top:293.98px;font-size:7.3px;line-height:10px;color:#d0d0d0;font-weight:normal;font-family:'Liberation Mono',monospace;transform:scaleX(0.82);transform-origin:right center;">1,344</div>
<div class="a" style="left:261px;top:295.6px;width:86px;height:4.6px;background:#2f96ee;"></div>
<div class="a " style="left:108.50px;top:302.60px;font-size:7.3px;line-height:10px;color:#d0d0d0;font-weight:normal;font-family:'Liberation Mono',monospace;transform:scaleX(0.82);transform-origin:left center;">2022-06-06</div>
<div class="a" style="right:609.70px;top:302.60px;font-size:7.3px;line-height:10px;color:#d0d0d0;font-weight:normal;font-family:'Liberation Mono',monospace;transform:scaleX(0.82);transform-origin:right center;">00:10:16</div>
<div class="a" style="right:575.00px;top:302.60px;font-size:7.3px;line-height:10px;color:#d0d0d0;font-weight:normal;font-family:'Liberation Mono',monospace;transform:scaleX(0.82);transform-origin:right center;">7 %</div>
<div class="a" style="right:540.70px;top:302.60px;font-size:7.3px;line-height:10px;color:#d0d0d0;font-weight:normal;font-family:'Liberation Mono',monospace;transform:scaleX(0.82);transform-origin:right center;">4</div>
<div class="a " style="left:108.50px;top:311.22px;font-size:7.3px;line-height:10px;color:#d0d0d0;font-weight:normal;font-family:'Liberation Mono',monospace;transform:scaleX(0.82);transform-origin:left center;">2022-06-13</div>
<div class="a" style="right:609.70px;top:311.22px;font-size:7.3px;line-height:10px;color:#d0d0d0;font-weight:normal;font-family:'Liberation Mono',monospace;transform:scaleX(0.82);transform-origin:right center;">00:14:21</div>
<div class="a" style="right:575.00px;top:311.22px;font-size:7.3px;line-height:10px;color:#d0d0d0;font-weight:normal;font-family:'Liberation Mono',monospace;transform:scaleX(0.82);transform-origin:right center;">40 %</div>
<div class="a" style="right:540.70px;top:311.22px;font-size:7.3px;line-height:10px;color:#d0d0d0;font-weight:normal;font-family:'Liberation Mono',monospace;transform:scaleX(0.82);transform-origin:right center;">3</div>
<div class="a " style="left:108.50px;top:319.84px;font-size:7.3px;line-height:10px;color:#d0d0d0;font-weight:normal;font-family:'Liberation Mono',monospace;transform:scaleX(0.82);transform-origin:left center;">2022-06-14</div>
<div class="a" style="right:609.70px;top:319.84px;font-size:7.3px;line-height:10px;color:#d0d0d0;font-weight:normal;font-family:'Liberation Mono',monospace;transform:scaleX(0.82);transform-origin:right center;">00:06:28</div>
<div class="a" style="right:575.00px;top:319.84px;font-size:7.3px;line-height:10px;color:#d0d0d0;font-weight:normal;font-family:'Liberation Mono',monospace;transform:scaleX(0.82);transform-origin:right center;">27 %</div>
<div class="a" style="right:540.70px;top:319.84px;font-size:7.3px;line-height:10px;color:#d0d0d0;font-weight:normal;font-family:'Liberation Mono',monospace;transform:scaleX(0.82);transform-origin:right center;">21</div>
<div class="a" style="left:261px;top:321.4px;width:1.8px;height:4.6px;background:#2f96ee;"></div>
<div class="a " style="left:108.50px;top:328.46px;font-size:7.3px;line-height:10px;color:#d0d0d0;font-weight:normal;font-family:'Liberation Mono',monospace;transform:scaleX(0.82);transform-origin:left center;">2022-09-11</div>
<div class="a" style="right:609.70px;top:328.46px;font-size:7.3px;line-height:10px;color:#d0d0d0;font-weight:normal;font-family:'Liberation Mono',monospace;transform:scaleX(0.82);transform-origin:right center;">00:23:48</div>
<div class="a" style="right:575.00px;top:328.46px;font-size:7.3px;line-height:10px;color:#d0d0d0;font-weight:normal;font-family:'Liberation Mono',monospace;transform:scaleX(0.82);transform-origin:right center;">56 %</div>
<div class="a" style="right:540.70px;top:328.46px;font-size:7.3px;line-height:10px;color:#d0d0d0;font-weight:normal;font-family:'Liberation Mono',monospace;transform:scaleX(0.82);transform-origin:right center;">12</div>
<div class="a" style="left:261px;top:330.1px;width:1px;height:4.6px;background:#2f96ee;"></div>
<div class="a " style="left:221.70px;top:340.00px;font-size:6.5px;line-height:10px;color:#d8d8d8;font-weight:normal;">Word count cap for the histogram</div>
<div class="a" style="left:321.5px;top:340.7px;width:33.5px;height:9.8px;background:#383838;border:1px solid #4a4a4a;border-radius:1px"></div>
<div class="a" style="left:349.5px;top:341.2px;width:5px;height:8.8px;background:#4a4a4a;"></div>
<div class="a " style="left:323.80px;top:340.60px;font-size:6.8px;line-height:10px;color:#dcdcdc;font-weight:normal;">1000</div>
<svg class="a" style="left:350px;top:341px" width="5" height="9"><path d="M1 3l1.5-1.5 1.5 1.5M1 6l1.5 1.5 1.5-1.5" fill="none" stroke="#a0a0a0" stroke-width="0.7"/></svg>
<div class="a" style="left:107.5px;top:363px;width:121px;height:74px;background:transparent;border:1px solid #3d3d3d;border-radius:1px"></div>
<div class="a" style="left:232.5px;top:363px;width:123px;height:74px;background:transparent;border:1px solid #3d3d3d;border-radius:1px"></div>
<div class="a " style="left:107.00px;top:353.20px;font-size:6.4px;line-height:10px;color:#d8d8d8;font-weight:normal;">Sum Totals</div>
<div class="a " style="left:232.50px;top:353.20px;font-size:6.4px;line-height:10px;color:#d8d8d8;font-weight:normal;">Filters</div>
<div class="a " style="left:112.20px;top:367.50px;font-size:6.5px;line-height:10px;color:#d8d8d8;font-weight:normal;">Total Time:</div>
<div class="a" style="right:575.00px;top:368.50px;font-size:7.3px;line-height:10px;color:#d0d0d0;font-weight:normal;font-family:'Liberation Mono',monospace;transform:scaleX(0.82);transform-origin:right center;">3-20:27:31</div>
<div class="a " style="left:112.20px;top:378.72px;font-size:6.5px;line-height:10px;color:#d8d8d8;font-weight:normal;">Idle Time:</div>
<div class="a" style="right:575.00px;top:379.72px;font-size:7.3px;line-height:10px;color:#d0d0d0;font-weight:normal;font-family:'Liberation Mono',monospace;transform:scaleX(0.82);transform-origin:right center;">3-12:56:20</div>
<div class="a " style="left:112.20px;top:389.94px;font-size:6.5px;line-height:10px;color:#d8d8d8;font-weight:normal;">Filtered Time:</div>
<div class="a" style="right:575.00px;top:390.94px;font-size:7.3px;line-height:10px;color:#d0d0d0;font-weight:normal;font-family:'Liberation Mono',monospace;transform:scaleX(0.82);transform-origin:right center;">08:50:28</div>
<div class="a " style="left:112.20px;top:401.16px;font-size:6.5px;line-height:10px;color:#d8d8d8;font-weight:normal;">Novel Word Count:</div>
<div class="a" style="right:575.00px;top:402.16px;font-size:7.3px;line-height:10px;color:#d0d0d0;font-weight:normal;font-family:'Liberation Mono',monospace;transform:scaleX(0.82);transform-origin:right center;">987</div>
<div class="a " style="left:112.20px;top:412.38px;font-size:6.5px;line-height:10px;color:#d8d8d8;font-weight:normal;">Notes Word Count:</div>
<div class="a" style="right:575.00px;top:413.38px;font-size:7.3px;line-height:10px;color:#d0d0d0;font-weight:normal;font-family:'Liberation Mono',monospace;transform:scaleX(0.82);transform-origin:right center;">409</div>
<div class="a " style="left:112.20px;top:423.60px;font-size:6.5px;line-height:10px;color:#d8d8d8;font-weight:normal;">Total Word Count:</div>
<div class="a" style="right:575.00px;top:424.60px;font-size:7.3px;line-height:10px;color:#d0d0d0;font-weight:normal;font-family:'Liberation Mono',monospace;transform:scaleX(0.82);transform-origin:right center;">1,396</div>
<div class="a " style="left:237.80px;top:367.60px;font-size:6.5px;line-height:10px;color:#d8d8d8;font-weight:normal;">Count novel files</div>
<svg class="a" style="left:337.5px;top:369.40px" width="13" height="6.4"><rect x="0" y="0" width="13" height="6.4" rx="3.2" fill="#3d9ae8"/><circle cx="9.8" cy="3.2" r="2.4" fill="#f0f8ff"/><path d="M8.7 3.2l0.8 0.8 1.4-1.6" fill="none" stroke="#3d9ae8" stroke-width="0.6"/></svg>
<div class="a " style="left:237.80px;top:378.36px;font-size:6.5px;line-height:10px;color:#d8d8d8;font-weight:normal;">Count note files</div>
<svg class="a" style="left:337.5px;top:380.16px" width="13" height="6.4"><rect x="0" y="0" width="13" height="6.4" rx="3.2" fill="#3d9ae8"/><circle cx="9.8" cy="3.2" r="2.4" fill="#f0f8ff"/><path d="M8.7 3.2l0.8 0.8 1.4-1.6" fill="none" stroke="#3d9ae8" stroke-width="0.6"/></svg>
<div class="a " style="left:237.80px;top:389.12px;font-size:6.5px;line-height:10px;color:#d8d8d8;font-weight:normal;">Hide zero word count</div>
<svg class="a" style="left:337.5px;top:390.92px" width="13" height="6.4"><rect x="0" y="0" width="13" height="6.4" rx="3.2" fill="#3d9ae8"/><circle cx="9.8" cy="3.2" r="2.4" fill="#f0f8ff"/><path d="M8.7 3.2l0.8 0.8 1.4-1.6" fill="none" stroke="#3d9ae8" stroke-width="0.6"/></svg>
<div class="a " style="left:237.80px;top:399.88px;font-size:6.5px;line-height:10px;color:#d8d8d8;font-weight:normal;">Hide negative word count</div>
<svg class="a" style="left:337.5px;top:401.68px" width="13" height="6.4"><rect x="0" y="0" width="13" height="6.4" rx="3.2" fill="#3d9ae8"/><circle cx="9.8" cy="3.2" r="2.4" fill="#f0f8ff"/><path d="M8.7 3.2l0.8 0.8 1.4-1.6" fill="none" stroke="#3d9ae8" stroke-width="0.6"/></svg>
<div class="a " style="left:237.80px;top:410.64px;font-size:6.5px;line-height:10px;color:#d8d8d8;font-weight:normal;">Group entries by day</div>
<svg class="a" style="left:337.5px;top:412.44px" width="13" height="6.4"><rect x="0" y="0" width="13" height="6.4" rx="3.2" fill="#3d9ae8"/><circle cx="9.8" cy="3.2" r="2.4" fill="#f0f8ff"/><path d="M8.7 3.2l0.8 0.8 1.4-1.6" fill="none" stroke="#3d9ae8" stroke-width="0.6"/></svg>
<div class="a " style="left:237.80px;top:421.40px;font-size:6.5px;line-height:10px;color:#d8d8d8;font-weight:normal;">Show idle time</div>
<svg class="a" style="left:337.5px;top:423.20px" width="13" height="6.4"><rect x="0" y="0" width="13" height="6.4" rx="3.2" fill="#8a8a8a"/><circle cx="3.2" cy="3.2" r="2.4" fill="#f0f0f0"/></svg>
<div class="a" style="left:280.3px;top:441.2px;width:37.4px;height:11.1px;background:#464646;border:1px solid #525252;border-radius:1px"></div>
<div class="a " style="left:285.50px;top:442.00px;font-size:6.8px;line-height:10px;color:#e0e0e0;font-weight:normal;">Save As</div>
<svg class="a" style="left:312px;top:445px" width="4" height="3"><path d="M0.5 0.5l1.5 1.5 1.5-1.5" fill="none" stroke="#909090" stroke-width="0.6"/></svg>
<div class="a" style="left:321.5px;top:441.2px;width:33.5px;height:11.1px;background:#464646;border:1px solid #525252;border-radius:1px"></div>
<svg class="a" style="left:327px;top:444.5px" width="5" height="5"><path d="M0.5 0.5l4 4M4.5 0.5l-4 4" stroke="#d8d8d8" stroke-width="0.8"/></svg>
<div class="a " style="left:333.20px;top:442.00px;font-size:6.6px;line-height:10px;color:#e0e0e0;font-weight:normal;">Close</div>
<div class="a" style="left:363.3px;top:147.2px;width:410.7px;height:310.3px;background:#363636;border-radius:2px 3px 2px 2px"></div>
<svg class="a" style="left:369px;top:149.8px" width="7" height="9" viewBox="0 0 7 9"><rect x="0.3" y="0.3" width="6.4" height="8.4" rx="1.5" fill="#2d5a9c"/><path d="M2.2 6V2.8h2.6V6" fill="none" stroke="#cfe2ff" stroke-width="1"/></svg>
<div class="a" style="left:268.00px;width:600px;text-align:center;top:149.00px;font-size:6.1px;line-height:10px;color:#dedede;font-weight:normal;">Build Manuscript</div>
<svg class="a" style="left:744.2px;top:151.4px" width="5" height="5"><path d="M0.3 4.2h4.4" stroke="#d8d8d8" stroke-width="0.9"/></svg>
<svg class="a" style="left:754.1px;top:151.4px" width="5" height="5"><rect x="0.4" y="0.4" width="4.2" height="4.2" fill="none" stroke="#d8d8d8" stroke-width="0.8"/><path d="M0.4 1.1h4.2" stroke="#d8d8d8" stroke-width="0.8"/></svg>
<svg class="a" style="left:763.6px;top:151.4px" width="5" height="5"><path d="M0.4 0.4l4.2 4.2M4.6 0.4l-4.2 4.2" stroke="#d8d8d8" stroke-width="0.9"/></svg>
<div class="a" style="left:366.5px;top:160.5px;width:139px;height:263px;background:#3d3d3d;"></div>
<div class="a " style="left:369.80px;top:164.60px;font-size:6.3px;line-height:10px;color:#e0e0e0;font-weight:bold;">Builds</div>
<svg class="a" style="left:477.5px;top:166.5px" width="26" height="7" viewBox="0 0 26 7"><path d="M3 0.5v6M0 3.5h6" stroke="#6cc06c" stroke-width="1.2"/><path d="M9.5 3.5h5.5" stroke="#d83848" stroke-width="1.6"/><path d="M19 6l4.5-4.5" stroke="#88b888" stroke-width="1.6"/></svg>
<div class="a" style="left:369.8px;top:177.5px;width:134.2px;height:8.6px;background:#2f95e8;"></div>
<svg class="a" style="left:372px;top:179px" width="5" height="5"><rect x="0.5" y="0.5" width="4" height="4" fill="none" stroke="#8ac8f0" stroke-width="0.6"/></svg>
<div class="a " style="left:380.20px;top:176.60px;font-size:6.4px;line-height:10px;color:#ffffff;font-weight:normal;">My Manuscript</div>
<svg class="a" style="left:371px;top:188px" width="6" height="6"><rect x="0.5" y="0.5" width="4.5" height="5" fill="none" stroke="#8ab0e0" stroke-width="0.8"/><path d="M1.5 2.5h2.5M1.5 4h2" stroke="#8ab0e0" stroke-width="0.6"/></svg>
<div class="a " style="left:380.20px;top:186.20px;font-size:6.4px;line-height:10px;color:#d8d8d8;font-weight:normal;">Test Build</div>
<svg class="a" style="left:434px;top:276px" width="8" height="3"><circle cx="2" cy="1.5" r="0.7" fill="#707070"/><circle cx="4" cy="1.5" r="0.7" fill="#707070"/><circle cx="6" cy="1.5" r="0.7" fill="#707070"/></svg>
<div class="a" style="left:369.5px;top:280.3px;width:135px;height:9.4px;background:#484848;"></div>
<div class="a " style="left:370.50px;top:280.40px;font-size:6.3px;line-height:10px;color:#d8d8d8;font-weight:normal;">Setting</div>
<div class="a " style="left:454.90px;top:280.40px;font-size:6.3px;line-height:10px;color:#d8d8d8;font-weight:normal;">Value</div>
<div class="a" style="left:376px;top:290.3px;width:78px;height:7.9px;background:#3f4b5d;"></div>
<div class="a " style="left:378.00px;top:289.40px;font-size:6.3px;line-height:10px;color:#e0e0e0;font-weight:normal;">Name</div>
<div class="a " style="left:454.90px;top:289.40px;font-size:6.3px;line-height:10px;color:#d8d8d8;font-weight:normal;">My Manuscript</div>
<svg class="a" style="left:371px;top:301.10px" width="4" height="3"><path d="M0.3 0.8l1.7 1.7 1.7-1.7" fill="none" stroke="#a0a0a0" stroke-width="0.7"/></svg>
<div class="a " style="left:378.00px;top:297.60px;font-size:6.4px;line-height:10px;color:#d4d4d4;font-weight:normal;">Selection</div>
<div class="a " style="left:384.00px;top:305.80px;font-size:6.4px;line-height:10px;color:#d4d4d4;font-weight:normal;">Novel</div>
<svg class="a" style="left:455.5px;top:307.80px" width="6" height="6"><circle cx="3" cy="3" r="2.5" fill="#70a8e8"/></svg>
<div class="a " style="left:384.00px;top:314.00px;font-size:6.4px;line-height:10px;color:#d4d4d4;font-weight:normal;">Sequel</div>
<svg class="a" style="left:455.5px;top:316.00px" width="6" height="6"><circle cx="3" cy="3" r="2.5" fill="#70a8e8"/></svg>
<div class="a " style="left:384.00px;top:322.20px;font-size:6.4px;line-height:10px;color:#d4d4d4;font-weight:normal;">Characters</div>
<svg class="a" style="left:455.5px;top:324.20px" width="6" height="6"><circle cx="3" cy="3" r="2.5" fill="#70a8e8"/></svg>
<div class="a " style="left:384.00px;top:330.40px;font-size:6.4px;line-height:10px;color:#d4d4d4;font-weight:normal;">Locations</div>
<svg class="a" style="left:455.5px;top:332.40px" width="6" height="6"><circle cx="3" cy="3" r="2" fill="none" stroke="#70a8e8" stroke-width="1"/></svg>
<svg class="a" style="left:371px;top:342.10px" width="4" height="3"><path d="M0.3 0.8l1.7 1.7 1.7-1.7" fill="none" stroke="#a0a0a0" stroke-width="0.7"/></svg>
<div class="a " style="left:378.00px;top:338.60px;font-size:6.4px;line-height:10px;color:#d4d4d4;font-weight:normal;">Headings</div>
<div class="a " style="left:384.00px;top:346.80px;font-size:6.4px;line-height:10px;color:#d4d4d4;font-weight:normal;">Title Headings</div>
<div class="a " style="left:454.90px;top:346.80px;font-size:6.3px;line-height:10px;color:#d0d0d0;font-weight:normal;">Title</div>
<div class="a " style="left:384.00px;top:355.00px;font-size:6.4px;line-height:10px;color:#d4d4d4;font-weight:normal;">Chapter Headings</div>
<div class="a " style="left:454.90px;top:355.00px;font-size:6.3px;line-height:10px;color:#d0d0d0;font-weight:normal;">Title</div>
<div class="a " style="left:384.00px;top:363.20px;font-size:6.4px;line-height:10px;color:#d4d4d4;font-weight:normal;">Unnumbered Headings</div>
<div class="a " style="left:454.90px;top:363.20px;font-size:6.3px;line-height:10px;color:#d0d0d0;font-weight:normal;">Title</div>
<div class="a " style="left:384.00px;top:371.40px;font-size:6.4px;line-height:10px;color:#d4d4d4;font-weight:normal;">Scene Headings</div>
<div class="a " style="left:454.90px;top:371.40px;font-size:6.3px;line-height:10px;color:#d0d0d0;font-weight:normal;">* * *</div>
<div class="a " style="left:384.00px;top:379.60px;font-size:6.4px;line-height:10px;color:#d4d4d4;font-weight:normal;">Section Headings</div>
<div class="a " style="left:384.00px;top:387.80px;font-size:6.4px;line-height:10px;color:#d4d4d4;font-weight:normal;">Hide Scene Headings</div>
<svg class="a" style="left:455.5px;top:389.80px" width="6" height="6"><circle cx="3" cy="3" r="2" fill="none" stroke="#70a8e8" stroke-width="1"/></svg>
<div class="a " style="left:384.00px;top:396.00px;font-size:6.4px;line-height:10px;color:#d4d4d4;font-weight:normal;">Hide Section Headings</div>
<svg class="a" style="left:455.5px;top:398.00px" width="6" height="6"><circle cx="3" cy="3" r="2.5" fill="#70a8e8"/></svg>
<svg class="a" style="left:371.5px;top:407.20px" width="3" height="4"><path d="M0.8 0.3l1.7 1.7-1.7 1.7" fill="none" stroke="#a0a0a0" stroke-width="0.7"/></svg>
<div class="a " style="left:378.00px;top:404.20px;font-size:6.4px;line-height:10px;color:#d4d4d4;font-weight:normal;">Text Content</div>
<div class="a" style="left:369.5px;top:426.3px;width:66.19999999999999px;height:11.199999999999989px;background:#3f4a5a;border:1px solid #5d7798;border-radius:1px"></div>
<div class="a" style="left:102.60px;width:600px;text-align:center;top:427.20px;font-size:6.8px;line-height:10px;color:#e0e0e0;font-weight:normal;">Preview</div>
<div class="a" style="left:438.9px;top:426.3px;width:65.70000000000005px;height:11.199999999999989px;background:#464646;border:1px solid #4e4e4e;border-radius:1px"></div>
<div class="a" style="left:171.75px;width:600px;text-align:center;top:427.20px;font-size:6.8px;line-height:10px;color:#e0e0e0;font-weight:normal;">Print</div>
<div class="a" style="left:369.5px;top:440.9px;width:66.19999999999999px;height:10.700000000000045px;background:#464646;border:1px solid #4e4e4e;border-radius:1px"></div>
<div class="a" style="left:102.60px;width:600px;text-align:center;top:441.55px;font-size:6.8px;line-height:10px;color:#e0e0e0;font-weight:normal;">Build</div>
<div class="a" style="left:438.9px;top:440.9px;width:65.70000000000005px;height:10.700000000000045px;background:#464646;border:1px solid #4e4e4e;border-radius:1px"></div>
<div class="a" style="left:171.75px;width:600px;text-align:center;top:441.55px;font-size:6.8px;line-height:10px;color:#e0e0e0;font-weight:normal;">Close</div>
<div class="a" style="left:505.6px;top:164.7px;width:255.4px;height:286.6px;background:#ffffff;"></div>
<div class="a" style="left:505.6px;top:164.7px;width:255.4px;height:17px;background:#fcf8c0;"></div>
<div class="a" style="left:333.30px;width:600px;text-align:center;top:165.30px;font-size:5.3px;line-height:10px;color:#202020;font-weight:bold;">My Manuscript</div>
<div class="a" style="left:333.30px;width:600px;text-align:center;top:171.60px;font-size:5.3px;line-height:10px;color:#202020;font-weight:normal;">Built: 29/11/23 13:11:59 (2 weeks ago)</div>
<div class="a" style="left:333.60px;width:600px;text-align:center;top:200.90px;font-size:13.4px;line-height:16px;color:#4a72a8;font-weight:bold;">My Novel</div>
<div class="a" style="left:333.60px;width:600px;text-align:center;top:219.80px;font-size:6.5px;line-height:10px;color:#202020;font-weight:bold;">By Jane Smith</div>
<div class="a" style="left:333.60px;width:600px;text-align:center;top:234.50px;font-size:6.9px;line-height:10px;color:#202020;font-weight:normal;">This is the title page.</div>
<div class="a" style="left:333.60px;width:600px;text-align:center;top:244.00px;font-size:6.9px;line-height:10px;color:#202020;font-weight:normal;">It should be the first document of the project.</div>
<div class="a " style="left:523.40px;top:298.40px;font-size:7.1px;line-height:10px;color:#262626;font-weight:normal;transform:scaleX(0.95);transform-origin:left center;">This is a plain page with some text on it.</div>
<div class="a " style="left:523.40px;top:313.20px;font-size:7.15px;line-height:10px;color:#262626;font-weight:normal;transform:scaleX(0.951);transform-origin:left center;">If you want the text to start on a fresh page, add the [newpage] code</div>
<div class="a " style="left:523.40px;top:322.70px;font-size:7.15px;line-height:10px;color:#262626;font-weight:normal;transform:scaleX(0.951);transform-origin:left center;">above the text. You can also add empty paragraphs with the [vspace]</div>
<div class="a " style="left:523.40px;top:332.20px;font-size:7.15px;line-height:10px;color:#262626;font-weight:normal;transform:scaleX(0.951);transform-origin:left center;">code. The above code adds two empty paragraphs before the text starts.</div>
<div class="a" style="left:333.60px;width:600px;text-align:center;top:352.00px;font-size:13px;line-height:16px;color:#4a72a8;font-weight:bold;">Part One</div>
<div class="a" style="left:333.60px;width:600px;text-align:center;top:371.70px;font-size:6.8px;line-height:10px;color:#202020;font-weight:normal;">In the beginning ...</div>
<div class="a " style="left:523.40px;top:390.90px;font-size:12.6px;line-height:16px;color:#4a72a8;font-weight:bold;">So it Begins</div>
<div class="a " style="left:523.40px;top:410.40px;font-size:6.8px;line-height:10px;color:#202020;font-weight:normal;">A chapter can contain leading text before the first scene, like this piece</div>
<div class="a " style="left:523.40px;top:419.60px;font-size:6.8px;line-height:10px;color:#202020;font-weight:normal;">of text.</div>
<svg class="a" style="left:625px;top:439px" width="18" height="4"><circle cx="2.3" cy="2" r="1" fill="#303030"/><circle cx="8.6" cy="2" r="1" fill="#303030"/><circle cx="15" cy="2" r="1" fill="#303030"/></svg>
<div class="a" style="left:761.2px;top:164.7px;width:6px;height:286.6px;background:#313131;"></div>
<div class="a" style="left:761.5px;top:175px;width:5.5px;height:48.5px;background:#404040;"></div>
<svg class="a" style="left:761.5px;top:166px" width="6" height="4"><path d="M1.5 3l1.5-1.5 1.5 1.5" fill="none" stroke="#a0a0a0" stroke-width="0.7"/></svg>
<svg class="a" style="left:761.5px;top:446px" width="6" height="4"><path d="M1.5 1l1.5 1.5 1.5-1.5" fill="none" stroke="#a0a0a0" stroke-width="0.7"/></svg>
</body></html>
